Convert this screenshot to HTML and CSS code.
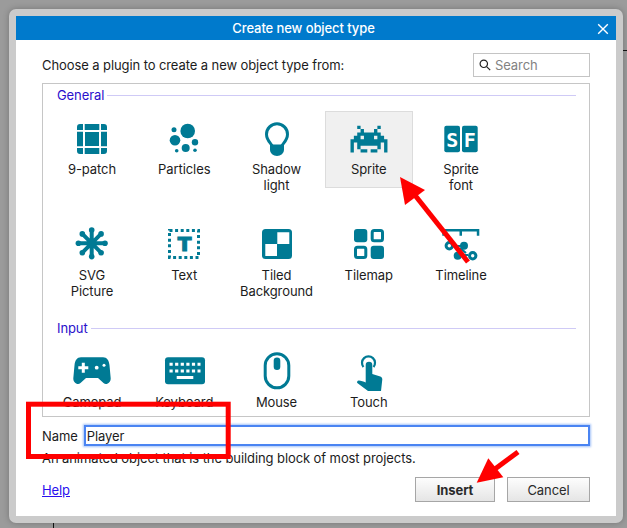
FILE: index.html
```html
<!DOCTYPE html>
<html lang="en">
  <head>
    <meta charset="UTF-8" />
    <meta name="viewport" content="width=device-width, initial-scale=1.0" />
    <title>Create new object type</title>
    <link rel="stylesheet" href="styles.css">
  </head>
  <body>
    <div class="window">
      <div class="titlebar">
        <span>Create new object type</span>
        <svg class="close" width="12" height="12" viewBox="0 0 12 12"><path d="M1.2 1.2l9.6 9.6M10.8 1.2l-9.6 9.6"/></svg>
      </div>
      <div class="content">
        <div class="toolbar">
          <span>Choose a plugin to create a new object type from:</span>
          <label class="search">
            <svg width="12" height="12" viewBox="0 0 12 12"><circle cx="4.8" cy="4.8" r="3.7"/><path d="M7.6 7.6l3.6 3.6"/></svg>
            <input type="text" placeholder="Search" />
          </label>
        </div>

        <div class="plugins">
          <div class="group-head"><span>General</span><i></i></div>
          <div class="icon-grid">
            <div class="plugin">
              <svg viewBox="0 0 48 44"><path d="M12 7h3v6H9v-3a3 3 0 0 1 3-3zM16.700 7h14.600v6H16.700zM33 7h3a3 3 0 0 1 3 3v3h-6zM9 14.700h6v14.600H9zM17 15h14v14H17zM33 14.700h6v14.600h-6zM9 31h6v6h-3a3 3 0 0 1-3-3zM16.700 31h14.600v6H16.700zM33 31h6v3a3 3 0 0 1-3 3h-3z"/></svg>
              <span>9-patch</span>
            </div>
            <div class="plugin">
              <svg viewBox="0 0 48 44"><circle cx="27.7" cy="14" r="7.3"/><circle cx="15" cy="23.3" r="5.3"/><circle cx="14" cy="12.7" r="2.5"/><circle cx="25.7" cy="31" r="4"/><circle cx="35" cy="25.3" r="3.2"/><circle cx="16.7" cy="33.7" r="1.8"/><circle cx="35" cy="33.3" r="1.8"/></svg>
              <span>Particles</span>
            </div>
            <div class="plugin">
              <svg viewBox="0 0 48 44"><path class="line" d="M19.5 30c0-3-6-5.500-6-12.700a10.500 10.500 0 0 1 21 0c0 7.200-6 9.700-6 12.700"/><path d="M17 27.500h14v5.500a7 6 0 0 1-14 0z"/></svg>
              <span>Shadow<br>light</span>
            </div>
            <div class="plugin selected">
              <svg viewBox="0 0 48 44"><g transform="translate(5.500 8.700) scale(3.36)"><path d="M2 0h1v1H2zM8 0h1v1H8zM3 1h1v1H3zM7 1h1v1H7zM2 2h7v1H2zM1 3h2v1H1zM4 3h3v1H4zM8 3h2v1H8zM0 4h11v1H0zM0 5h1v3H0zM2 5h7v1H2zM10 5h1v3H10zM2 6h1v1H2zM8 6h1v1H8zM3 7h2v1H3zM6 7h2v1H6z"/></g></svg>
              <span>Sprite</span>
            </div>
            <div class="plugin">
              <svg viewBox="0 0 48 44"><rect x="7.300" y="8.700" width="15.700" height="26.600" rx="2"/><rect x="25" y="8.700" width="15.700" height="26.600" rx="2"/><text class="letter" x="15.150" y="29.500">S</text><text class="letter" x="32.850" y="29.500">F</text></svg>
              <span>Sprite<br>font</span>
            </div>
            <div class="plugin lower">
              <svg viewBox="0 0 48 44"><path class="spoke" d="M23.700 7v28.600M9.400 21.300H38M13.600 11.200l20.200 20.200M33.800 11.200L13.600 31.400"/><circle cx="23.700" cy="8" r="2.800"/><circle cx="23.700" cy="34.600" r="2.800"/><circle cx="10.400" cy="21.300" r="2.800"/><circle cx="37" cy="21.300" r="2.800"/><circle cx="14.300" cy="11.900" r="2.800"/><circle cx="33.100" cy="11.900" r="2.800"/><circle cx="14.300" cy="30.700" r="2.800"/><circle cx="33.100" cy="30.700" r="2.800"/></svg>
              <span>SVG<br>Picture</span>
            </div>
            <div class="plugin lower">
              <svg viewBox="0 0 48 44"><rect class="dots" x="9.500" y="8.500" width="29" height="27"/><text class="big-t" x="24.500" y="29.100">T</text></svg>
              <span>Text</span>
            </div>
            <div class="plugin lower">
              <svg viewBox="0 0 48 44"><rect x="9" y="7" width="30" height="30" rx="3.500"/><path class="white" d="M24.300 10.300h12V22h-12zM12.300 22H24v12H12.300z"/></svg>
              <span>Tiled<br>Background</span>
            </div>
            <div class="plugin lower">
              <svg viewBox="0 0 48 44"><rect x="9" y="7" width="13.300" height="13.300" rx="3"/><rect class="ring" x="27.200" y="8.500" width="10.300" height="10.300" rx="2"/><rect class="ring" x="10.500" y="25.200" width="10.300" height="10.300" rx="2"/><rect x="25.700" y="23.700" width="13.300" height="13.300" rx="3"/></svg>
              <span>Tilemap</span>
            </div>
            <div class="plugin lower">
              <svg viewBox="0 0 48 44"><path d="M5.300 7h37v6.700h-2.500V9.500H25v4.200h-2.500V9.500H7.800v4.200H5.300z"/><path class="line thin" d="M15 24h9M23 26l6 5M24 33h7"/><circle class="ring" cx="12.300" cy="23.700" r="3.200"/><circle cx="27" cy="23.700" r="4"/><circle cx="20.700" cy="33.700" r="4"/><circle class="ring" cx="35.700" cy="33.700" r="3.200"/></svg>
              <span>Timeline</span>
            </div>
          </div>

          <div class="group-head second"><span>Input</span><i></i></div>
          <div class="icon-grid input-grid">
            <div class="plugin">
              <svg viewBox="0 0 48 44"><path d="M13 9.300h22c4 0 6 3 6.500 8l1.200 13c.3 4-4.200 7.500-7.200 4.800L30 30H18l-5.500 5.100c-3 2.700-7.500-.8-7.200-4.800l1.200-13c.5-5 2.500-8 6.500-8z"/><path class="white" d="M13.800 14.700h3v3.500h3.500v3h-3.500v3.500h-3v-3.500h-3.500v-3h3.500z"/><circle class="white" cx="28.700" cy="19.700" r="1.900"/><circle class="white" cx="36" cy="17.300" r="1.500"/></svg>
              <span>Gamepad</span>
            </div>
            <div class="plugin">
              <svg viewBox="0 0 48 44"><rect x="5" y="9.300" width="40" height="27" rx="3"/><path class="keys" d="M9.500 16.200h31M9.500 23h31"/><path class="white" d="M16.700 28h16.600v3H16.700z"/></svg>
              <span>Keyboard</span>
            </div>
            <div class="plugin">
              <svg viewBox="0 0 48 44"><rect class="ring" x="12.200" y="5.800" width="23.600" height="34" rx="11.800"/><rect x="20.700" y="9.500" width="6.600" height="12.500" rx="3.300"/></svg>
              <span>Mouse</span>
            </div>
            <div class="plugin">
              <svg viewBox="0 0 48 44"><path class="line thin" d="M18.500 19a6.500 6.500 0 1 1 10 0"/><path d="M20.700 17a3.300 3.300 0 0 1 6.600 0v9l8 2.500c1.500.5 2 1.500 2 3L36 43H23l-10.700-8c-.7-1 0-2.500 1.500-2.500 2 0 5 1 6.900 2z"/></svg>
              <span>Touch</span>
            </div>
          </div>
        </div>

        <div class="name-row">
          <label for="name">Name</label>
          <input id="name" type="text" value="Player" />
        </div>
        <div class="description">An animated object that is the building block of most projects.</div>

        <div class="footer">
          <a href="#">Help</a>
          <div class="buttons">
            <button class="primary">Insert</button>
            <button>Cancel</button>
          </div>
        </div>
      </div>
    </div>

    <i class="stray stray-right"></i>
    <i class="stray stray-bottom"></i>

    <svg class="annotations" width="627" height="528" viewBox="0 0 627 528">
      <rect class="mark" x="28.500" y="404.200" width="199.700" height="52.300"/>
      <path class="mark" d="M468 262L414 194"/>
      <path class="head" d="M400 177L425 190L405 205z"/>
      <path class="mark" d="M518 452L495 469"/>
      <path class="head" d="M476.700 482.700L488.300 458.300L503.300 477.300z"/>
    </svg>
  </body>
</html>
```

FILE: styles.css
```css
* {
  box-sizing: border-box;
}

body {
  margin: 0;
  width: 627px;
  height: 528px;
  overflow: hidden;
  padding: 9px 4px 5px 9px;
  background-color: #9b9b9b;
  font-family: 'Inter', 'Liberation Sans', sans-serif;
  font-size: 13px;
  letter-spacing: -0.09px;
  color: #1c1c1c;
}

.window {
  height: 514px;
  padding: 7px;
  border-radius: 7px;
  background-color: #cbcbcb;
  box-shadow: 0 0 6px rgba(0, 0, 0, 0.25);
}

.titlebar {
  display: flex;
  align-items: center;
  justify-content: center;
  position: relative;
  height: 24px;
  padding-right: 25px;
  background-color: #007acc;
  color: #fff;
  font-weight: 500;
}

.close {
  position: absolute;
  right: 7px;
  top: 7px;
  fill: none;
  stroke: #fff;
  stroke-width: 1.4;
}

.content {
  display: flex;
  flex-direction: column;
  height: 476px;
  padding: 13px 26px 14px;
  background-color: #fff;
}

.toolbar {
  display: flex;
  align-items: center;
  justify-content: space-between;
  height: 24px;
  margin-bottom: 6px;
}

.search {
  display: flex;
  align-items: center;
  gap: 4px;
  width: 117px;
  height: 24px;
  padding-left: 5px;
  border: 1px solid #c4c4c4;
}

.search svg {
  fill: none;
  stroke: #222;
  stroke-width: 1.2;
}

.search input {
  width: 85px;
  border: none;
  outline: none;
  padding: 0;
  font: inherit;
  letter-spacing: inherit;
}

.search input::placeholder {
  color: #828282;
}

.plugins {
  flex: 1;
  padding: 0 5px;
  border: 1px solid #c6c6c6;
  overflow: hidden;
}

.group-head {
  display: flex;
  align-items: center;
  gap: 3px;
  height: 14px;
  margin: 4px 8px 9px 9px;
  color: #2a10cc;
}

.group-head.second {
  margin-bottom: 7px;
}

.group-head i {
  flex: 1;
  height: 1px;
  background-color: #cfcaf6;
}

.icon-grid {
  display: grid;
  grid-template-columns: repeat(5, 88px);
  grid-auto-rows: 101px;
  column-gap: 4.25px;
  row-gap: 4px;
  align-items: start;
}

.plugin {
  padding: 6px 4px 10px;
  border: 1px solid transparent;
  text-align: center;
  line-height: 16px;
}

.plugin.selected {
  border-color: #dcdcdc;
  background-color: #f0f0f0;
}

.plugin svg {
  display: block;
  width: 48px;
  height: 44px;
  margin: -1px auto 0;
  fill: #007a94;
}

.plugin span {
  display: block;
}

.plugin.lower span {
  margin-top: 1px;
}

.input-grid .plugin span {
  margin-top: 2px;
}

.plugin .white {
  fill: #fff;
}

.plugin .line {
  fill: none;
  stroke: #007a94;
  stroke-width: 3;
}

.plugin .line.thin {
  stroke-width: 2.2;
}

.plugin .ring {
  fill: none;
  stroke: #007a94;
  stroke-width: 3;
}

.plugin .spoke {
  fill: none;
  stroke: #007a94;
  stroke-width: 4;
}

.plugin .dots {
  fill: none;
  stroke: #007a94;
  stroke-width: 3;
  stroke-dasharray: 3 2.6;
}

.plugin .keys {
  fill: none;
  stroke: #fff;
  stroke-width: 3;
  stroke-dasharray: 3.200 2.400;
}

.plugin .letter {
  fill: #fff;
  font-family: 'DejaVu Sans Mono', monospace;
  font-weight: bold;
  font-size: 20px;
  text-anchor: middle;
}

.plugin .big-t {
  fill: #007a94;
  stroke: #007a94;
  stroke-width: 1.2;
  font-family: 'DejaVu Sans', sans-serif;
  font-weight: bold;
  font-size: 20px;
  text-anchor: middle;
}

.name-row {
  display: flex;
  align-items: center;
  gap: 6px;
  margin-top: 8px;
}

.name-row input {
  flex: 1;
  height: 21px;
  padding: 0 1px;
  border: 2px solid #4a84f2;
  outline: none;
  box-shadow: 0 0 2px 1px #a5c3f8;
  font: inherit;
  letter-spacing: inherit;
  color: inherit;
}

.description {
  height: 16px;
  margin-top: 4px;
  line-height: 16px;
}

.footer {
  display: flex;
  align-items: center;
  justify-content: space-between;
  margin-top: 11px;
}

.footer a {
  color: #2a10ee;
}

.buttons {
  display: flex;
  gap: 12px;
}

button {
  width: 83px;
  height: 25px;
  padding: 0;
  border: 1px solid #a6a6a6;
  background: linear-gradient(#fdfdfd, #e5e5e5);
  font: inherit;
  letter-spacing: inherit;
  color: #2a2a2a;
}

button.primary {
  width: 80px;
  font-weight: bold;
}

.stray {
  position: absolute;
  background-color: #111;
}

.stray-right {
  left: 623px;
  top: 50px;
  width: 4px;
  height: 1px;
}

.stray-bottom {
  left: 53px;
  top: 523px;
  width: 1px;
  height: 5px;
}

.annotations {
  position: absolute;
  left: 0;
  top: 0;
}

.mark {
  fill: none;
  stroke: #ff0000;
  stroke-width: 5;
}

.head {
  fill: #ff0000;
}
```
